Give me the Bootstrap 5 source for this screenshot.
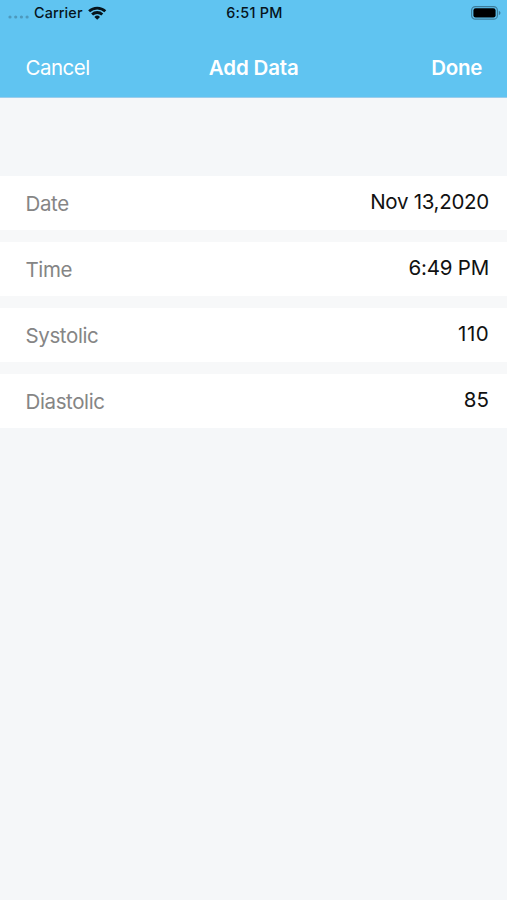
<!DOCTYPE html>
<html lang="en">
<head>
<meta charset="utf-8">
<meta name="viewport" content="width=device-width, initial-scale=1">
<title>Add Data</title>
<link href="https://cdn.jsdelivr.net/npm/bootstrap@5.3.0/dist/css/bootstrap.min.css" rel="stylesheet">
<style>
body{font-family:Inter,"Liberation Sans",sans-serif;background:#f5f7f9;color:#111;min-height:100vh;font-size:20.5px;line-height:24px}
.top-area{background:#60c4f1;height:98px;border-bottom:1px solid #9bcdec}
.status-line{height:26px;font-size:14.4px;line-height:26px;font-weight:500;color:#06141c;padding:0 6px 0 8px}
.carrier{letter-spacing:.1px}
.clock{letter-spacing:.3px}
.side{flex:1 1 0}
.title-line{height:71px;padding:12px 25px 0 25.5px;color:#fff}
.title-line .side{line-height:60px}
.cancel{letter-spacing:-.5px}
.done{letter-spacing:-.3px}
.title-text{font-weight:600;line-height:60px;letter-spacing:-.15px}
.entries{padding-top:78px}
.entry-list{gap:12px;background:#f7f8f9}
.entry{height:54px;background:#fff;padding:0 18px 0 25.5px}
.entry-label{color:#858585;letter-spacing:-.38px;padding-top:2px}
.entry-value{padding-bottom:2px}
.entry-date{letter-spacing:-.28px}
.entry-time{letter-spacing:-.2px}
.entry-systolic{letter-spacing:.6px;margin-right:-.4px}
</style>
</head>
<body>
<header class="top-area">
  <div class="status-line d-flex align-items-center">
    <div class="side d-flex align-items-center">
      <svg width="26" height="26" viewBox="0 0 26 26" fill="#4d99bd"><circle cx="2" cy="17" r="1.6"/><circle cx="7.7" cy="17" r="1.6"/><circle cx="13.4" cy="17" r="1.6"/><circle cx="19.1" cy="17" r="1.6"/></svg>
      <span class="carrier">Carrier</span>
      <svg class="ms-1" width="20" height="26" viewBox="-.8 0 20 26" fill="none" stroke="#06141c" stroke-width="2.8"><path d="M1.3 11.3a11.9 11.9 0 0 1 16.2 0M4.3 14.5a7.5 7.5 0 0 1 10.2 0"/><path d="M9.4 19.7l-2.8-2.8a4.1 4.1 0 0 1 5.6 0z" fill="#06141c" stroke="none"/></svg>
    </div>
    <div class="clock">6:51 PM</div>
    <div class="side d-flex justify-content-end">
      <svg width="30" height="26" viewBox="0 0 30 26"><rect x=".6" y="6.6" width="25.8" height="12.6" rx="3.8" fill="none" stroke="#3c7c9a" stroke-width="1.2"/><rect x="2.4" y="8.3" width="22.2" height="9.2" rx="2.2" fill="#000"/><path d="M27.8 10.7c2.2.8 2.2 3.6 0 4.4z" fill="#3c7c9a"/></svg>
    </div>
  </div>
  <nav class="title-line d-flex">
    <div class="side"><span class="cancel">Cancel</span></div>
    <div class="title-text">Add Data</div>
    <div class="side text-end fw-semibold"><span class="done">Done</span></div>
  </nav>
</header>
<main class="entries">
  <div class="entry-list d-flex flex-column">
    <div class="entry d-flex align-items-center justify-content-between"><span class="entry-label">Date</span><span class="entry-value entry-date">Nov 13,2020</span></div>
    <div class="entry d-flex align-items-center justify-content-between"><span class="entry-label">Time</span><span class="entry-value entry-time">6:49 PM</span></div>
    <div class="entry d-flex align-items-center justify-content-between"><span class="entry-label">Systolic</span><span class="entry-value entry-systolic">110</span></div>
    <div class="entry d-flex align-items-center justify-content-between"><span class="entry-label">Diastolic</span><span class="entry-value">85</span></div>
  </div>
</main>
<script src="https://cdn.jsdelivr.net/npm/bootstrap@5.3.0/dist/js/bootstrap.bundle.min.js"></script>
</body>
</html>
